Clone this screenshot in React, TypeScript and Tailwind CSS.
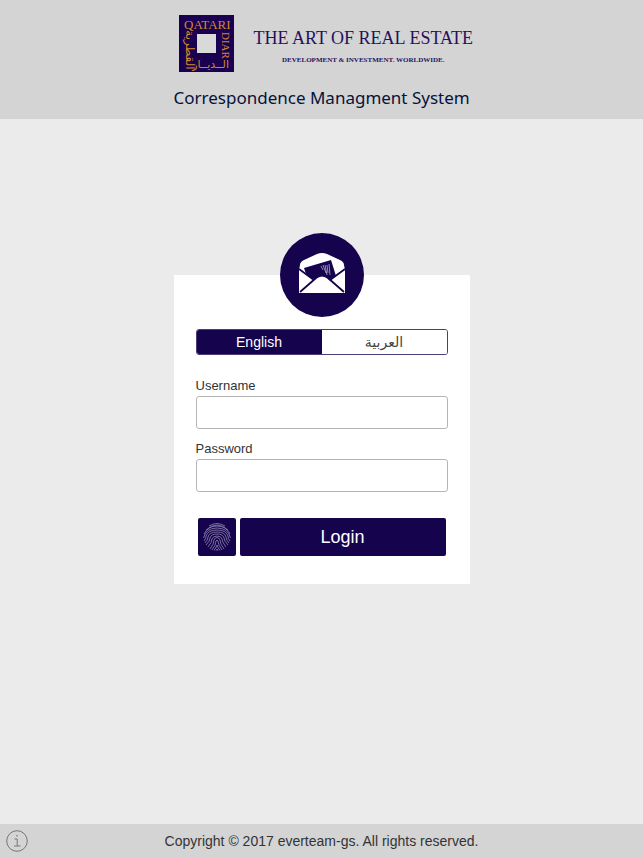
import { useState } from 'react'

function BrandLogo() {
  return (
    <svg className="h-[57px] w-[55px] shrink-0" viewBox="0 0 55 57" role="img" aria-label="Qatari Diar">
      <rect width="55" height="57" fill="#1a0050" />
      <rect x="18" y="19" width="19" height="19" fill="#d9d9d9" />
      <g fill="#d08a2c" fontFamily="'Liberation Serif', serif">
        <text x="5" y="14" fontSize="13">QATARI</text>
        <text x="0" y="0" fontSize="11" transform="translate(43 17) rotate(90)">DIAR</text>
        <text x="50" y="53" fontSize="11" textAnchor="end" fontFamily="'DejaVu Sans', sans-serif">الــديــار</text>
        <text x="0" y="0" fontSize="12" textAnchor="middle" fontFamily="'DejaVu Sans', sans-serif" transform="translate(7 35) rotate(90)">القطرية</text>
      </g>
    </svg>
  )
}

function EnvelopeIcon() {
  return (
    <svg className="mb-1 h-10 w-12" viewBox="0 0 48 40" aria-hidden="true">
      <path d="M1 17 L2 12 Q2 9 6 7 L19 1 Q24 -1 29 1 L42 7 Q46 9 46 12 L47 17 V40 H1Z" fill="#fff" />
      <path d="M6 15 L33 7 L38 23 L30 30 L9 24Z" fill="#16034d" />
      <path d="M1 16 L16 28 L1 40Z" fill="#fff" />
      <path d="M47 16 L32 28 L47 40Z" fill="#fff" />
      <path d="M1 40 L18 26 Q24 21 30 26 L47 40Z" fill="#fff" />
      <path d="M1 16 L16 27 M47 16 L32 27 M2 39 L18 25 M46 39 L30 25" stroke="#16034d" strokeWidth="1.8" fill="none" />
      <path d="M23 13 L25 17 M25 12 L28 20 M27 12 L29 22 M29 12 L30 20 M31 11 L32 22" stroke="#c9c4dd" strokeWidth="0.7" />
    </svg>
  )
}

function FingerprintIcon() {
  return (
    <svg className="h-7 w-7" viewBox="0 0 28 28" fill="none" stroke="#8f87b3" strokeWidth="0.8" aria-hidden="true">
      <path d="M6 3 Q14 -2 22 3 M3 7 Q14 -3 25 7 M1 11 Q5 3 14 3 T27 11 M0.5 15 Q3 5 14 5 T27.5 15" />
      <path d="M1 18 Q3 16 3 13 Q5 7 14 7 T25 13 Q25 16 27 18 M2 20 Q5 17 5 14 Q6 9 14 9 T23 14 Q23 17 26 20" />
      <path d="M3 22 Q7 18 7 15 Q8 11 14 11 T21 15 Q21 18 25 22 M5 24 Q9 19 9 16 Q10 13 14 13 T19 16 Q19 19 23 24" />
      <path d="M7 26 Q11 21 11 17 Q12 14.5 14 14.5 T17 17 Q17 21 21 26 M9 27 Q13 22 13 18 Q14 16 15 18 Q15 22 19 27" />
      <path d="M11 27.5 Q13 25 14 22 Q15 25 17 27.5 M13 27.7 L14 26 L15 27.7" />
    </svg>
  )
}

function InfoIcon() {
  return (
    <svg className="h-[22px] w-[22px]" viewBox="0 0 22 22" fill="none" stroke="#777" aria-hidden="true">
      <circle cx="11" cy="11" r="10.3" />
      <path d="M8.5 9 H11.2 V16 M8 16 H14.5" />
      <circle cx="11" cy="5.8" r="0.8" fill="#777" stroke="none" />
    </svg>
  )
}

const inputClass =
  'block h-[33px] w-full rounded-[3px] border border-[#b5b5b5] bg-white px-2 text-[13px] text-[#333] outline-none focus:border-[#16034d]'

export default function App() {
  const [language, setLanguage] = useState('en')

  const tabClass = (active: boolean) =>
    active ? 'flex-1 bg-[#16034d] text-white' : 'flex-1 bg-white text-[#444]'

  return (
    <div className="flex min-h-screen flex-col bg-[#ebebeb] font-['Liberation_Sans','DejaVu_Sans',sans-serif] text-[#333]">
      <header className="flex justify-center bg-[#d4d4d4] pt-[15px] pb-2">
        <div className="w-full max-w-[296px]">
          <div className="flex items-start gap-5 pl-[5px]">
            <BrandLogo />
            <div className="flex-1 pt-3 text-center font-['Liberation_Serif',serif] whitespace-nowrap text-[#24125e]">
              <p className="text-[18px] leading-[22px]">THE ART OF REAL ESTATE</p>
              <p className="mt-1 text-[7px] leading-[14px] font-bold">DEVELOPMENT &amp; INVESTMENT. WORLDWIDE.</p>
            </div>
          </div>
          <h1 className="mt-3 text-center font-['Noto_Sans',sans-serif] text-[17px] leading-[27px] whitespace-nowrap text-[#06123a]">
            Correspondence Managment System
          </h1>
        </div>
      </header>

      <main className="flex flex-1 flex-col items-center justify-center pb-[94px]">
        <div className="mt-[10px] w-full max-w-[296px] bg-white px-[22px] pb-7">
          <div className="mx-auto -mt-[42px] flex h-[84px] w-[84px] items-center justify-center rounded-full bg-[#16034d]">
            <EnvelopeIcon />
          </div>

          <form onSubmit={(e) => e.preventDefault()}>
            <div className="mt-3 flex h-[26px] overflow-hidden rounded-[3px] border border-[#4a3d78] text-[14px]">
              <button type="button" className={tabClass(language === 'en')} onClick={() => setLanguage('en')}>
                English
              </button>
              <button type="button" lang="ar" className={tabClass(language === 'ar')} onClick={() => setLanguage('ar')}>
                العربية
              </button>
            </div>

            <label htmlFor="username" className="mt-[21px] block text-[13px] leading-[20px]">
              Username
            </label>
            <input id="username" type="text" className={inputClass} />

            <label htmlFor="password" className="mt-[10px] block text-[13px] leading-[20px]">
              Password
            </label>
            <input id="password" type="password" className={inputClass} />

            <div className="mt-[26px] flex gap-1 px-[2px]">
              <button
                type="button"
                aria-label="Login with fingerprint"
                className="flex h-[38px] w-[38px] items-center justify-center rounded-[2px] bg-[#16034d]"
              >
                <FingerprintIcon />
              </button>
              <button type="submit" className="h-[38px] flex-1 rounded-[2px] bg-[#16034d] text-[18px] text-white">
                Login
              </button>
            </div>
          </form>
        </div>
      </main>

      <footer className="grid h-[34px] grid-cols-[28px_1fr_28px] items-center bg-[#d4d4d4] px-[6px]">
        <button type="button" aria-label="Information">
          <InfoIcon />
        </button>
        <p className="text-center text-[14px]">Copyright © 2017 everteam-gs. All rights reserved.</p>
      </footer>
    </div>
  )
}
